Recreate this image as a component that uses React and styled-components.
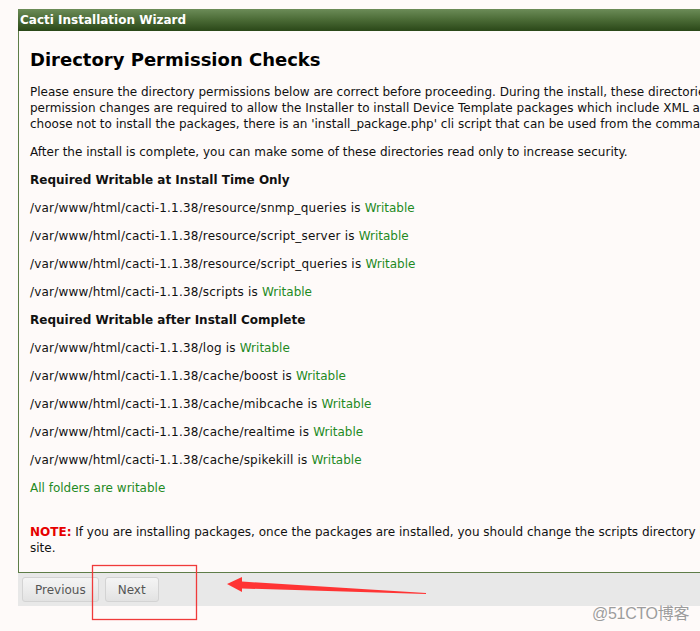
import React from 'react';
import styled, { createGlobalStyle } from 'styled-components';

const GlobalStyle = createGlobalStyle`
  html, body {
    margin: 0;
    padding: 0;
    background: #fefaf9;
    overflow: hidden;
  }
  body {
    font-family: Verdana, "DejaVu Sans", sans-serif;
    font-size: 12px;
    color: #111;
  }
`;

const Page = styled.div`
  position: relative;
  width: 700px;
  height: 631px;
  overflow: hidden;
  padding: 9px 0 0 18px;
  box-sizing: border-box;
`;

const Wizard = styled.div`
  width: 1100px;
`;

const Header = styled.div`
  height: 22px;
  line-height: 22px;
  padding-left: 2px;
  background: linear-gradient(to bottom, #6c8c58 0%, #4a6a35 50%, #2a4718 100%);
  color: #fff;
  font-weight: bold;
  font-size: 12px;
`;

const Body = styled.div`
  border-left: 1px solid #5e7d48;
  border-bottom: 1px solid #5e7d48;
  padding: 17px 11px 4px;
`;

const Heading = styled.h2`
  margin: 0 0 12px;
  font-size: 18px;
  line-height: 24px;
  font-weight: bold;
  color: #000;
`;

const Para = styled.p`
  margin: ${(p) => (p.$gap ? `${p.$gap}px` : '12px')} 0 12px;
  line-height: 16px;
  white-space: nowrap;
  font-weight: ${(p) => (p.$bold ? 'bold' : 'normal')};
  color: ${(p) => (p.$ok ? '#1f8a1f' : '#111')};
  letter-spacing: ${(p) => (p.$path ? '0.2px' : 'normal')};
  &:first-of-type {
    margin-top: 0;
  }
`;

const Ok = styled.span`
  color: #1f8a1f;
  letter-spacing: normal;
`;

const Note = styled.span`
  color: #e60000;
  font-weight: bold;
`;

const Footer = styled.div`
  display: flex;
  gap: 6px;
  height: 33px;
  padding: 4px;
  box-sizing: border-box;
  background: #e8e8e8;
`;

const Button = styled.button`
  height: 25px;
  padding: 0 ${(p) => p.$pad || 12}px;
  border: 1px solid #d3d3d3;
  border-radius: 3px;
  background: linear-gradient(to bottom, #f4f4f4 0%, #ececec 50%, #e2e2e2 100%);
  color: #555;
  font-family: Verdana, "DejaVu Sans", sans-serif;
  font-size: 12px;
`;

const Watermark = styled.div`
  position: absolute;
  left: 592px;
  top: 600px;
  font-family: "Liberation Sans", "Noto Sans CJK SC", sans-serif;
  font-size: 16px;
  color: #9c9c9c;
  text-shadow: 0 0 1px #fff;
  letter-spacing: -0.3px;
`;

const Marks = styled.svg`
  position: absolute;
  left: 0;
  top: 0;
  pointer-events: none;
`;

const dirs1 = [
  'resource/snmp_queries',
  'resource/script_server',
  'resource/script_queries',
  'scripts',
];

const dirs2 = [
  'log',
  'cache/boost',
  'cache/mibcache',
  'cache/realtime',
  'cache/spikekill',
];

const base = '/var/www/html/cacti-1.1.38/';

export default function App() {
  return (
    <>
      <GlobalStyle />
      <Page>
        <Wizard>
          <Header>Cacti Installation Wizard</Header>
          <Body>
            <Heading>Directory Permission Checks</Heading>
            <Para>
              Please ensure the directory permissions below are correct before proceeding. During the install, these directories need to be owned by the Web Server user. These
              <br />
              permission changes are required to allow the Installer to install Device Template packages which include XML and script files that will be placed in these directories. If you
              <br />
              choose not to install the packages, there is an 'install_package.php' cli script that can be used from the command line after the install is complete.
            </Para>
            <Para>After the install is complete, you can make some of these directories read only to increase security.</Para>
            <Para $bold>Required Writable at Install Time Only</Para>
            {dirs1.map((d) => (
              <Para key={d} $path>
                {base + d} is <Ok>Writable</Ok>
              </Para>
            ))}
            <Para $bold>Required Writable after Install Complete</Para>
            {dirs2.map((d) => (
              <Para key={d} $path>
                {base + d} is <Ok>Writable</Ok>
              </Para>
            ))}
            <Para $ok>All folders are writable</Para>
            <Para $gap={28}>
              <Note>NOTE:</Note> If you are installing packages, once the packages are installed, you should change the scripts directory back to read only as this presents some exposure to the web
              <br />
              site.
            </Para>
          </Body>
          <Footer>
            <Button $pad={12}>Previous</Button>
            <Button $pad={12}>Next</Button>
          </Footer>
        </Wizard>
        <Marks width="700" height="631" viewBox="0 0 700 631">
          <rect x="92.5" y="565.5" width="104" height="54" fill="none" stroke="#f03a3a" strokeWidth="1.3" />
          <polygon
            points="227,584 242,577 242,581.5 426,593 426,594 242,588.5 242,592"
            fill="#ff3434"
          />
        </Marks>
        <Watermark>@51CTO博客</Watermark>
      </Page>
    </>
  );
}
